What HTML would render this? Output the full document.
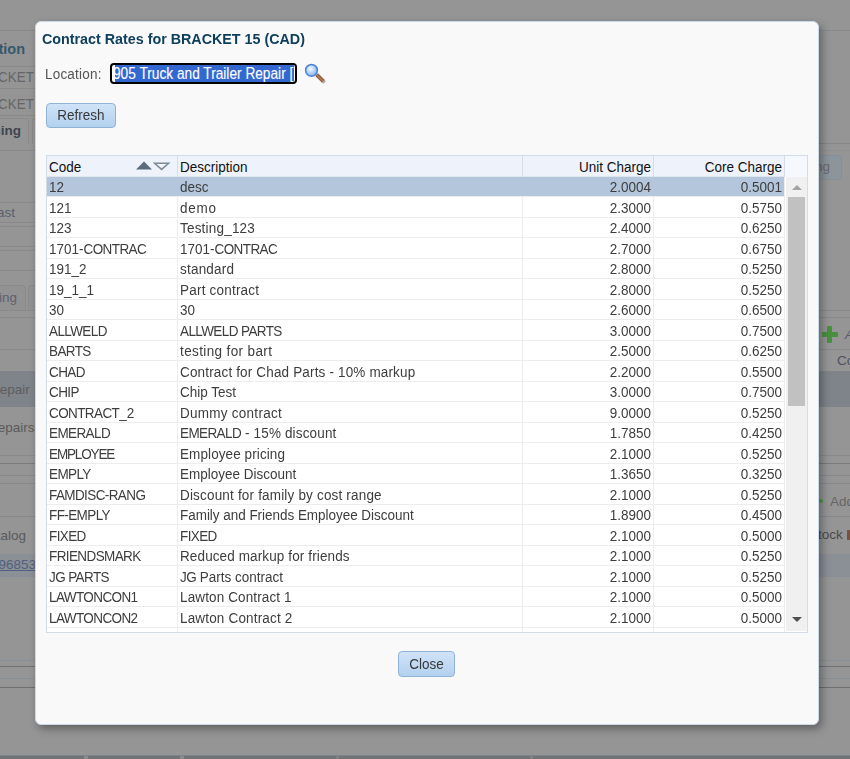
<!DOCTYPE html>
<html><head><meta charset="utf-8">
<style>
html,body{margin:0;padding:0;}
body{width:850px;height:759px;position:relative;overflow:hidden;background:#959595;font-family:"Liberation Sans",sans-serif;}
.a{position:absolute;}
.bgl{position:absolute;height:1px;background:#8a8a8a;}
.bgt{position:absolute;font-size:13.5px;line-height:16px;color:#555;white-space:nowrap;}
#dlg{position:absolute;left:35px;top:21px;width:782px;height:702px;background:#f9f9f9;border:1px solid #c9d9ea;border-radius:6px;box-shadow:3px 4px 8px rgba(0,0,0,0.35);}
.title{position:absolute;left:42px;top:31px;font-size:14.3px;font-weight:bold;color:#0e405e;will-change:transform;white-space:nowrap;line-height:16px;}
.lbl{position:absolute;left:45px;top:67px;font-size:13.5px;letter-spacing:0.2px;color:#555;will-change:transform;transform:scaleY(1.08);transform-origin:0 12.7px;line-height:16px;white-space:nowrap;}
.inp{position:absolute;left:110px;top:63px;width:183px;height:17px;border:2px solid #000;border-radius:4px;background:#fff;overflow:hidden;}
.selbg{position:absolute;left:3px;top:0px;width:179px;height:17px;background:#3468d1;}
.inptxt{position:absolute;left:1px;top:1px;font-size:13.7px;line-height:17px;color:#fff;white-space:nowrap;transform:scaleY(1.16);transform-origin:0 13px;-webkit-text-stroke:0.1px #fff;}
.btn{position:absolute;border:1px solid #8fb2d6;border-radius:4px;background:linear-gradient(#d0e3f7,#b2d1ef);font-size:13.5px;color:#383838;will-change:transform;text-align:center;box-sizing:border-box;}
.grid{position:absolute;left:46px;top:155px;width:760px;height:476px;border:1px solid #d3dde8;background:#fff;}
.hdr{position:absolute;left:47px;top:156px;width:737px;height:20px;background:#eef3fb;border-bottom:1px solid #dde5ee;}
.hdr2{position:absolute;left:784px;top:156px;width:23px;height:21px;background:#f5f8fc;}
.hd{position:absolute;top:156px;width:1px;height:21px;background:#d5dde6;}
.ht{position:absolute;top:160px;font-size:13.5px;line-height:16px;color:#111;transform:scaleY(1.07);transform-origin:0 12.7px;white-space:nowrap;}
.sel{position:absolute;left:47px;width:737px;background:#b3c6dc;border-bottom:0;}
.rl{position:absolute;left:47px;width:737px;height:1px;background:#ededed;}
.cd{position:absolute;width:1px;background:#ededed;}
.t{position:absolute;font-size:13.5px;line-height:16px;color:#3d3d3d;transform:scaleY(1.07);transform-origin:0 12.7px;white-space:nowrap;}
.r{text-align:right;}
.bt{display:inline-block;transform:scaleY(1.08);transform-origin:50% 70%;}
.u{letter-spacing:-0.6px;}
.lay{position:absolute;left:0;top:0;width:850px;height:759px;will-change:transform;}
.sb{position:absolute;left:786px;top:177px;width:21px;height:454px;background:#f0f0f0;}
.thumb{position:absolute;left:788px;top:197px;width:17px;height:209px;background:#c1c1c1;}
</style></head><body>

<!-- background page (dimmed) -->
<div class="bgl" style="left:0;top:30px;width:850px;background:#878b8e"></div>
<div class="bgt" style="right:825px;top:41px;font-weight:bold;color:#36586a;font-size:14.5px">Location</div>
<div class="bgl" style="left:0;top:66px;width:35px"></div>
<div class="bgt" style="right:816px;top:70px;color:#666;transform:scaleY(1.07)">BRACKET</div>
<div class="bgl" style="left:0;top:88px;width:35px"></div>
<div class="bgt" style="right:816px;top:97px;color:#666;transform:scaleY(1.07)">BRACKET</div>
<div class="bgl" style="left:0;top:115px;width:35px"></div>
<div class="a" style="left:-40px;top:118px;width:67px;height:25px;border:1px solid #8a8a8a;border-bottom:0;border-radius:4px 4px 0 0"></div>
<div class="a" style="left:32px;top:118px;width:30px;height:25px;border:1px solid #8a8a8a;border-bottom:0;border-radius:4px 4px 0 0"></div>
<div class="bgt" style="right:829px;top:123px;font-weight:bold;color:#404550">Pricing</div>
<div class="bgl" style="left:0;top:150px;width:35px"></div>
<div class="bgl" style="left:0;top:202px;width:35px"></div>
<div class="bgt" style="right:835px;top:205px;color:#5a6070">Last</div>
<div class="bgl" style="left:0;top:222px;width:35px"></div>
<div class="bgl" style="left:0;top:226px;width:35px"></div>
<div class="bgl" style="left:0;top:246px;width:35px"></div>
<div class="bgl" style="left:0;top:250px;width:35px"></div>
<div class="bgl" style="left:0;top:270px;width:35px"></div>
<div class="a" style="left:-40px;top:285px;width:64px;height:25px;border:1px solid #8a8a8a;border-bottom:0;border-radius:4px 4px 0 0;background:#929292"></div>
<div class="a" style="left:28px;top:285px;width:30px;height:25px;border:1px solid #8a8a8a;border-bottom:0;border-radius:4px 4px 0 0;background:#929292"></div>
<div class="bgt" style="right:833px;top:290px;color:#606070">Pricing</div>
<div class="bgl" style="left:0;top:310px;width:35px"></div>
<div class="bgl" style="left:0;top:317px;width:35px"></div>
<div class="bgl" style="left:0;top:349px;width:35px"></div>
<div class="a" style="left:0;top:371px;width:35px;height:36px;background:#7f838a"></div>
<div class="bgt" style="left:-10px;top:382px;color:#5e5e5e">Repair</div>
<div class="bgt" style="left:-12px;top:420px;color:#5a5a5a">Repairs</div>
<div class="bgl" style="left:0;top:455px;width:35px"></div>
<div class="bgl" style="left:0;top:463px;width:35px;background:#7b7b7b"></div>
<div class="bgl" style="left:0;top:475px;width:35px"></div>
<div class="bgl" style="left:0;top:483px;width:35px"></div>
<div class="bgl" style="left:0;top:516px;width:35px"></div>
<div class="bgt" style="right:824px;top:528px;color:#5a5a5a">Catalog</div>
<div class="a" style="left:0;top:554px;width:35px;height:23px;background:#8b8f96"></div>
<div class="bgt" style="left:-9px;top:557px;color:#506080;text-decoration:underline">1968533</div>
<div class="bgl" style="left:0;top:660px;width:850px;background:#888f94"></div>
<div class="bgl" style="left:0;top:666px;width:850px;background:#717171"></div>
<div class="bgl" style="left:0;top:678px;width:850px;background:#888f94"></div>
<div class="bgl" style="left:0;top:687px;width:850px;background:#6f6f6f"></div>

<div class="bgl" style="left:819px;top:143px;width:31px;background:#858585"></div>
<div class="bgl" style="left:819px;top:150px;width:31px;background:#8d9190"></div>
<div class="a" style="left:790px;top:155px;width:52px;height:25px;border-radius:4px;background:#8c949c;border:1px solid #86909a;box-sizing:border-box"></div>
<div class="bgt" style="right:20px;top:159px;color:#6a6a70">Pricing</div>
<div class="bgl" style="left:819px;top:310px;width:31px"></div>
<div class="bgl" style="left:819px;top:317px;width:31px"></div>
<div class="a" style="left:822px;top:332px;width:16px;height:5px;background:#48903f;border-radius:1px"></div>
<div class="a" style="left:827px;top:326px;width:5px;height:17px;background:#48903f;border-radius:1px"></div>
<div class="bgt" style="left:845px;top:327px;color:#5a5a6a;font-style:italic">Add</div>
<div class="bgl" style="left:819px;top:349px;width:31px"></div>
<div class="bgt" style="left:837px;top:353px;color:#505060">Code</div>
<div class="a" style="left:819px;top:371px;width:31px;height:36px;background:#7f848b"></div>
<div class="bgl" style="left:819px;top:455px;width:31px"></div>
<div class="bgl" style="left:819px;top:463px;width:31px;background:#7b7b7b"></div>
<div class="bgl" style="left:819px;top:475px;width:31px"></div>
<div class="bgl" style="left:819px;top:483px;width:31px"></div>
<div class="a" style="left:819px;top:499px;width:4px;height:4px;background:#4e9a4a;border-radius:2px"></div>
<div class="bgt" style="left:830px;top:494px;color:#666">Add</div>
<div class="bgl" style="left:819px;top:516px;width:31px"></div>
<div class="bgt" style="left:809px;top:527px;color:#4a4a4a">Stock</div>
<div class="a" style="left:847px;top:530px;width:3px;height:10px;background:#7a5040"></div>
<div class="a" style="left:819px;top:554px;width:31px;height:23px;background:#8b8f96"></div>

<div class="a" style="left:0;top:755px;width:850px;height:4px;background:#727374;border-top:1px solid #7d858c;box-sizing:border-box"></div>
<div class="a" style="left:84px;top:756px;width:4px;height:3px;background:#8c8c8c"></div>
<div class="a" style="left:336px;top:756px;width:3px;height:3px;background:#808080"></div>
<div class="a" style="left:530px;top:756px;width:3px;height:3px;background:#808080"></div>
<div class="a" style="left:180px;top:756px;width:4px;height:3px;background:#8c8c8c"></div>

<!-- dialog -->
<div id="dlg"></div>
<div class="title">Contract Rates for BRACKET 15 (CAD)</div>
<div class="lbl">Location:</div>
<div class="inp"><div class="selbg"></div><div class="inptxt">905 Truck and Trailer Repair [</div></div>
<svg class="a" style="left:300px;top:58px" width="30" height="30" viewBox="0 0 30 30">
  <defs>
    <radialGradient id="lens" cx="0.42" cy="0.38" r="0.62">
      <stop offset="0" stop-color="#f6faff"/>
      <stop offset="0.45" stop-color="#c3dbf7"/>
      <stop offset="0.85" stop-color="#94bdf0"/>
      <stop offset="1" stop-color="#7aa7e4"/>
    </radialGradient>
  </defs>
  <line x1="23" y1="23" x2="24.6" y2="24.6" stroke="#a8a8a8" stroke-width="3.6"/>
  <line x1="16.6" y1="16.6" x2="23.2" y2="23.2" stroke="#9b5d3a" stroke-width="4"/>
  <line x1="17" y1="17" x2="22.8" y2="22.8" stroke="#c28f70" stroke-width="1.2" opacity="0.7"/>
  <circle cx="11.5" cy="12.3" r="5.9" fill="url(#lens)" stroke="#4f84d2" stroke-width="1.5"/>
</svg>
<div class="btn" style="left:46px;top:103px;width:70px;height:25px;line-height:23px"><span class="bt">Refresh</span></div>

<div class="grid"></div>
<div class="hdr"></div>
<div class="hdr2"></div>
<div class="hd" style="left:177px"></div>
<div class="hd" style="left:522px"></div>
<div class="hd" style="left:653px"></div>
<div class="hd" style="left:784px"></div>
<div class="ht" style="left:49px">Code</div>
<div class="ht" style="left:180px">Description</div>
<div class="ht" style="right:199px">Unit Charge</div>
<div class="ht" style="right:68px">Core Charge</div>
<svg class="a" style="left:134px;top:159px" width="40" height="14" viewBox="0 0 40 14">
  <polygon points="2,10.5 10,2.5 18,10.5" fill="#5b6c7e"/>
  <polygon points="20.6,4.2 34.6,4.2 27.6,10.4" fill="#f3f5f8" stroke="#7b8a98" stroke-width="1.5" stroke-linejoin="miter"/>
</svg>
<div class="cd" style="left:177px;top:177px;height:455px"></div><div class="cd" style="left:522px;top:177px;height:455px"></div><div class="cd" style="left:653px;top:177px;height:455px"></div><div class="cd" style="left:784px;top:177px;height:455px"></div>
<div class="lay">
<div class="sel" style="top:177px;height:19px"></div>
<div class="rl" style="top:196px"></div>
<div class="t" style="left:49px;top:180px">12</div>
<div class="t" style="left:180px;top:180px;">desc</div>
<div class="t r" style="right:199px;top:180px">2.0004</div>
<div class="t r" style="right:68px;top:180px">0.5001</div>
<div class="rl" style="top:217px"></div>
<div class="t" style="left:49px;top:201px">121</div>
<div class="t" style="left:180px;top:201px;letter-spacing:0.733px;">demo</div>
<div class="t r" style="right:199px;top:201px">2.3000</div>
<div class="t r" style="right:68px;top:201px">0.5750</div>
<div class="rl" style="top:237px"></div>
<div class="t" style="left:49px;top:221px">123</div>
<div class="t" style="left:180px;top:221px;letter-spacing:0.200px;">Testing_123</div>
<div class="t r" style="right:199px;top:221px">2.4000</div>
<div class="t r" style="right:68px;top:221px">0.6250</div>
<div class="rl" style="top:258px"></div>
<div class="t" style="left:49px;top:242px">1701-<span class="u">CONTRAC</span></div>
<div class="t" style="left:180px;top:242px;">1701-<span class="u">CONTRAC</span></div>
<div class="t r" style="right:199px;top:242px">2.7000</div>
<div class="t r" style="right:68px;top:242px">0.6750</div>
<div class="rl" style="top:278px"></div>
<div class="t" style="left:49px;top:262px">191_2</div>
<div class="t" style="left:180px;top:262px;letter-spacing:0.214px;">standard</div>
<div class="t r" style="right:199px;top:262px">2.8000</div>
<div class="t r" style="right:68px;top:262px">0.5250</div>
<div class="rl" style="top:299px"></div>
<div class="t" style="left:49px;top:283px">19_1_1</div>
<div class="t" style="left:180px;top:283px;letter-spacing:0.208px;">Part contract</div>
<div class="t r" style="right:199px;top:283px">2.8000</div>
<div class="t r" style="right:68px;top:283px">0.5250</div>
<div class="rl" style="top:319px"></div>
<div class="t" style="left:49px;top:303px">30</div>
<div class="t" style="left:180px;top:303px;">30</div>
<div class="t r" style="right:199px;top:303px">2.6000</div>
<div class="t r" style="right:68px;top:303px">0.6500</div>
<div class="rl" style="top:340px"></div>
<div class="t" style="left:49px;top:324px"><span class="u">ALLWELD</span></div>
<div class="t" style="left:180px;top:324px;"><span class="u">ALLWELD PARTS</span></div>
<div class="t r" style="right:199px;top:324px">3.0000</div>
<div class="t r" style="right:68px;top:324px">0.7500</div>
<div class="rl" style="top:360px"></div>
<div class="t" style="left:49px;top:344px"><span class="u">BARTS</span></div>
<div class="t" style="left:180px;top:344px;letter-spacing:0.380px;">testing for bart</div>
<div class="t r" style="right:199px;top:344px">2.5000</div>
<div class="t r" style="right:68px;top:344px">0.6250</div>
<div class="rl" style="top:381px"></div>
<div class="t" style="left:49px;top:365px"><span class="u">CHAD</span></div>
<div class="t" style="left:180px;top:365px;letter-spacing:0.160px;">Contract for Chad Parts - 10% markup</div>
<div class="t r" style="right:199px;top:365px">2.2000</div>
<div class="t r" style="right:68px;top:365px">0.5500</div>
<div class="rl" style="top:401px"></div>
<div class="t" style="left:49px;top:385px"><span class="u">CHIP</span></div>
<div class="t" style="left:180px;top:385px;">Chip Test</div>
<div class="t r" style="right:199px;top:385px">3.0000</div>
<div class="t r" style="right:68px;top:385px">0.7500</div>
<div class="rl" style="top:422px"></div>
<div class="t" style="left:49px;top:406px"><span class="u">CONTRACT</span>_2</div>
<div class="t" style="left:180px;top:406px;letter-spacing:0.262px;">Dummy contract</div>
<div class="t r" style="right:199px;top:406px">9.0000</div>
<div class="t r" style="right:68px;top:406px">0.5250</div>
<div class="rl" style="top:442px"></div>
<div class="t" style="left:49px;top:426px"><span class="u">EMERALD</span></div>
<div class="t" style="left:180px;top:426px;letter-spacing:0.157px;"><span class="u">EMERALD</span> - 15% discount</div>
<div class="t r" style="right:199px;top:426px">1.7850</div>
<div class="t r" style="right:68px;top:426px">0.4250</div>
<div class="rl" style="top:463px"></div>
<div class="t" style="left:49px;top:447px"><span class="u" style="letter-spacing:-1.129px">EMPLOYEE</span></div>
<div class="t" style="left:180px;top:447px;letter-spacing:0.093px;">Employee pricing</div>
<div class="t r" style="right:199px;top:447px">2.1000</div>
<div class="t r" style="right:68px;top:447px">0.5250</div>
<div class="rl" style="top:483px"></div>
<div class="t" style="left:49px;top:467px"><span class="u">EMPLY</span></div>
<div class="t" style="left:180px;top:467px;">Employee Discount</div>
<div class="t r" style="right:199px;top:467px">1.3650</div>
<div class="t r" style="right:68px;top:467px">0.3250</div>
<div class="rl" style="top:504px"></div>
<div class="t" style="left:49px;top:488px"><span class="u">FAMDISC-RANG</span></div>
<div class="t" style="left:180px;top:488px;letter-spacing:0.181px;">Discount for family by cost range</div>
<div class="t r" style="right:199px;top:488px">2.1000</div>
<div class="t r" style="right:68px;top:488px">0.5250</div>
<div class="rl" style="top:524px"></div>
<div class="t" style="left:49px;top:508px"><span class="u">FF-EMPLY</span></div>
<div class="t" style="left:180px;top:508px;letter-spacing:-0.034px;">Family and Friends Employee Discount</div>
<div class="t r" style="right:199px;top:508px">1.8900</div>
<div class="t r" style="right:68px;top:508px">0.4500</div>
<div class="rl" style="top:545px"></div>
<div class="t" style="left:49px;top:529px"><span class="u">FIXED</span></div>
<div class="t" style="left:180px;top:529px;"><span class="u">FIXED</span></div>
<div class="t r" style="right:199px;top:529px">2.1000</div>
<div class="t r" style="right:68px;top:529px">0.5000</div>
<div class="rl" style="top:565px"></div>
<div class="t" style="left:49px;top:549px"><span class="u">FRIENDSMARK</span></div>
<div class="t" style="left:180px;top:549px;letter-spacing:0.120px;">Reduced markup for friends</div>
<div class="t r" style="right:199px;top:549px">2.1000</div>
<div class="t r" style="right:68px;top:549px">0.5250</div>
<div class="rl" style="top:586px"></div>
<div class="t" style="left:49px;top:570px"><span class="u">JG PARTS</span></div>
<div class="t" style="left:180px;top:570px;"><span class="u">JG</span> Parts contract</div>
<div class="t r" style="right:199px;top:570px">2.1000</div>
<div class="t r" style="right:68px;top:570px">0.5250</div>
<div class="rl" style="top:606px"></div>
<div class="t" style="left:49px;top:590px"><span class="u">LAWTONCON</span>1</div>
<div class="t" style="left:180px;top:590px;letter-spacing:0.125px;">Lawton Contract 1</div>
<div class="t r" style="right:199px;top:590px">2.1000</div>
<div class="t r" style="right:68px;top:590px">0.5000</div>
<div class="rl" style="top:627px"></div>
<div class="t" style="left:49px;top:611px"><span class="u">LAWTONCON</span>2</div>
<div class="t" style="left:180px;top:611px;letter-spacing:0.169px;">Lawton Contract 2</div>
<div class="t r" style="right:199px;top:611px">2.1000</div>
<div class="t r" style="right:68px;top:611px">0.5000</div>
</div>
<div class="sb"></div>
<div class="thumb"></div>
<svg class="a" style="left:790px;top:183px" width="14" height="9"><polygon points="2,7 7,2 12,7" fill="#a3a3a3"/></svg>
<svg class="a" style="left:790px;top:615px" width="14" height="9"><polygon points="2,2 12,2 7,7" fill="#505050"/></svg>

<div class="btn" style="left:398px;top:651px;width:57px;height:26px;line-height:26px"><span class="bt">Close</span></div>
</body></html>
